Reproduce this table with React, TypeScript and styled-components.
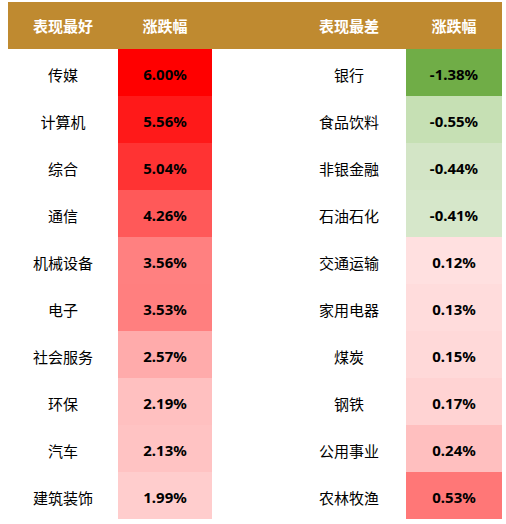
import React from 'react'
import styled, { createGlobalStyle } from 'styled-components'

const GlobalStyle = createGlobalStyle`
  body {
    margin: 0;
    padding: 2px 0 0 8px;
    background: #ffffff;
    font-family: "Noto Sans CJK SC", "Noto Sans", sans-serif;
  }
`

// five columns: best name, best change, spacer, worst name, worst change
const Board = styled.div`
  display: grid;
  grid-template-columns: 110px 94px 80px 114px 96px;
  grid-auto-rows: 47px;
  width: 494px;
`

const HeadCell = styled.div`
  background: #bf8a30;
  color: #ffffff;
  font-weight: 700;
  font-size: 15px;
  display: flex;
  align-items: center;
  justify-content: center;
  padding-bottom: 1px;
`

const NameCell = styled.div`
  display: flex;
  align-items: center;
  justify-content: center;
  font-size: 15px;
  color: #000000;
  padding-top: 4px;
`

const ValueCell = styled.div<{ $bg: string }>`
  display: flex;
  align-items: center;
  justify-content: center;
  background: ${(p) => p.$bg};
  font-family: "Noto Sans", "Noto Sans CJK SC", sans-serif;
  font-weight: 700;
  font-size: 15px;
  color: #000000;
  padding-top: 2px;
`

const Spacer = styled.div``

interface Row {
  best: string
  bestVal: string
  bestBg: string
  worst: string
  worstVal: string
  worstBg: string
}

const rows: Row[] = [
  { best: '传媒', bestVal: '6.00%', bestBg: '#ff0000', worst: '银行', worstVal: '-1.38%', worstBg: '#70ad47' },
  { best: '计算机', bestVal: '5.56%', bestBg: '#ff1919', worst: '食品饮料', worstVal: '-0.55%', worstBg: '#c6e0b4' },
  { best: '综合', bestVal: '5.04%', bestBg: '#ff3333', worst: '非银金融', worstVal: '-0.44%', worstBg: '#d3e5c6' },
  { best: '通信', bestVal: '4.26%', bestBg: '#ff5959', worst: '石油石化', worstVal: '-0.41%', worstBg: '#d6e7ca' },
  { best: '机械设备', bestVal: '3.56%', bestBg: '#ff8080', worst: '交通运输', worstVal: '0.12%', worstBg: '#ffe0e0' },
  { best: '电子', bestVal: '3.53%', bestBg: '#ff7f7f', worst: '家用电器', worstVal: '0.13%', worstBg: '#ffdcdc' },
  { best: '社会服务', bestVal: '2.57%', bestBg: '#ffabab', worst: '煤炭', worstVal: '0.15%', worstBg: '#ffd9d9' },
  { best: '环保', bestVal: '2.19%', bestBg: '#ffc0c0', worst: '钢铁', worstVal: '0.17%', worstBg: '#ffd3d3' },
  { best: '汽车', bestVal: '2.13%', bestBg: '#ffc3c3', worst: '公用事业', worstVal: '0.24%', worstBg: '#ffbfbf' },
  { best: '建筑装饰', bestVal: '1.99%', bestBg: '#ffcdcd', worst: '农林牧渔', worstVal: '0.53%', worstBg: '#ff7777' },
]

const App = () => {
  return (
    <>
      <GlobalStyle />
      <Board>
        <HeadCell>表现最好</HeadCell>
        <HeadCell>涨跌幅</HeadCell>
        <HeadCell />
        <HeadCell>表现最差</HeadCell>
        <HeadCell>涨跌幅</HeadCell>
        {rows.map((r) => (
          <React.Fragment key={r.best}>
            <NameCell>{r.best}</NameCell>
            <ValueCell $bg={r.bestBg}>{r.bestVal}</ValueCell>
            <Spacer />
            <NameCell>{r.worst}</NameCell>
            <ValueCell $bg={r.worstBg}>{r.worstVal}</ValueCell>
          </React.Fragment>
        ))}
      </Board>
    </>
  )
}

export default App
